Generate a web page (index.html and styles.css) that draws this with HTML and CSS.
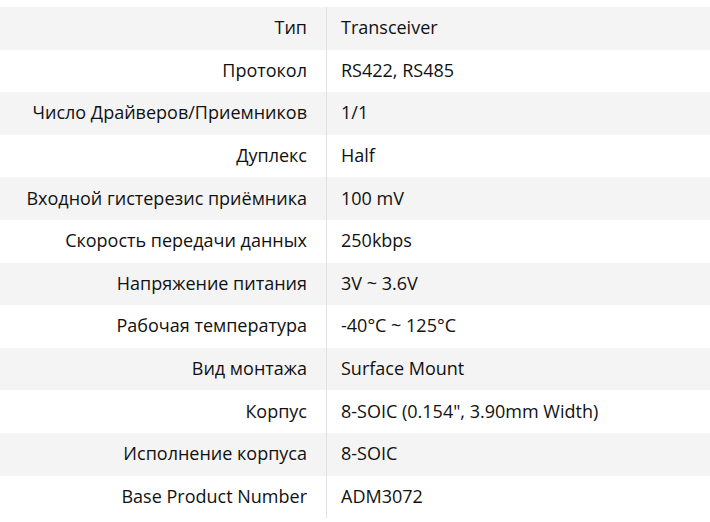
FILE: index.html
```html
<!DOCTYPE html>
<html lang="ru">
<head>
<meta charset="utf-8">
<link rel="stylesheet" href="styles.css">
</head>
<body>
<table class="specs">
  <tbody>
    <tr><th>Тип</th><td>Transceiver</td></tr>
    <tr><th>Протокол</th><td>RS422, RS485</td></tr>
    <tr><th>Число Драйверов/Приемников</th><td>1/1</td></tr>
    <tr><th>Дуплекс</th><td>Half</td></tr>
    <tr><th>Входной гистерезис приёмника</th><td>100 mV</td></tr>
    <tr><th>Скорость передачи данных</th><td>250kbps</td></tr>
    <tr><th>Напряжение питания</th><td>3V ~ 3.6V</td></tr>
    <tr><th>Рабочая температура</th><td>-40°C ~ 125°C</td></tr>
    <tr><th>Вид монтажа</th><td>Surface Mount</td></tr>
    <tr><th>Корпус</th><td>8-SOIC (0.154", 3.90mm Width)</td></tr>
    <tr><th>Исполнение корпуса</th><td>8-SOIC</td></tr>
    <tr><th>Base Product Number</th><td>ADM3072</td></tr>
  </tbody>
</table>
</body>
</html>
```

FILE: styles.css
```css
html, body {
  margin: 0;
  padding: 0;
  background: #ffffff;
}
body {
  padding-top: 7px;
  font-family: "Open Sans", "Noto Sans", sans-serif;
  font-size: 18px;
  line-height: 24px;
  color: #111111;
}
.specs {
  width: 710px;
  border-collapse: collapse;
  border-spacing: 0;
}
.specs tr {
  height: 42.6px;
}
.specs tr:nth-child(odd) {
  background: #f4f4f4;
}
.specs th,
.specs td {
  padding: 0 0 2px 0;
  font-weight: 400;
  vertical-align: middle;
  white-space: nowrap;
}
.specs th {
  width: 307px;
  padding-right: 19px;
  text-align: right;
  border-right: 1px solid #e2e2e2;
}
.specs td {
  padding-left: 14px;
  text-align: left;
}
```
